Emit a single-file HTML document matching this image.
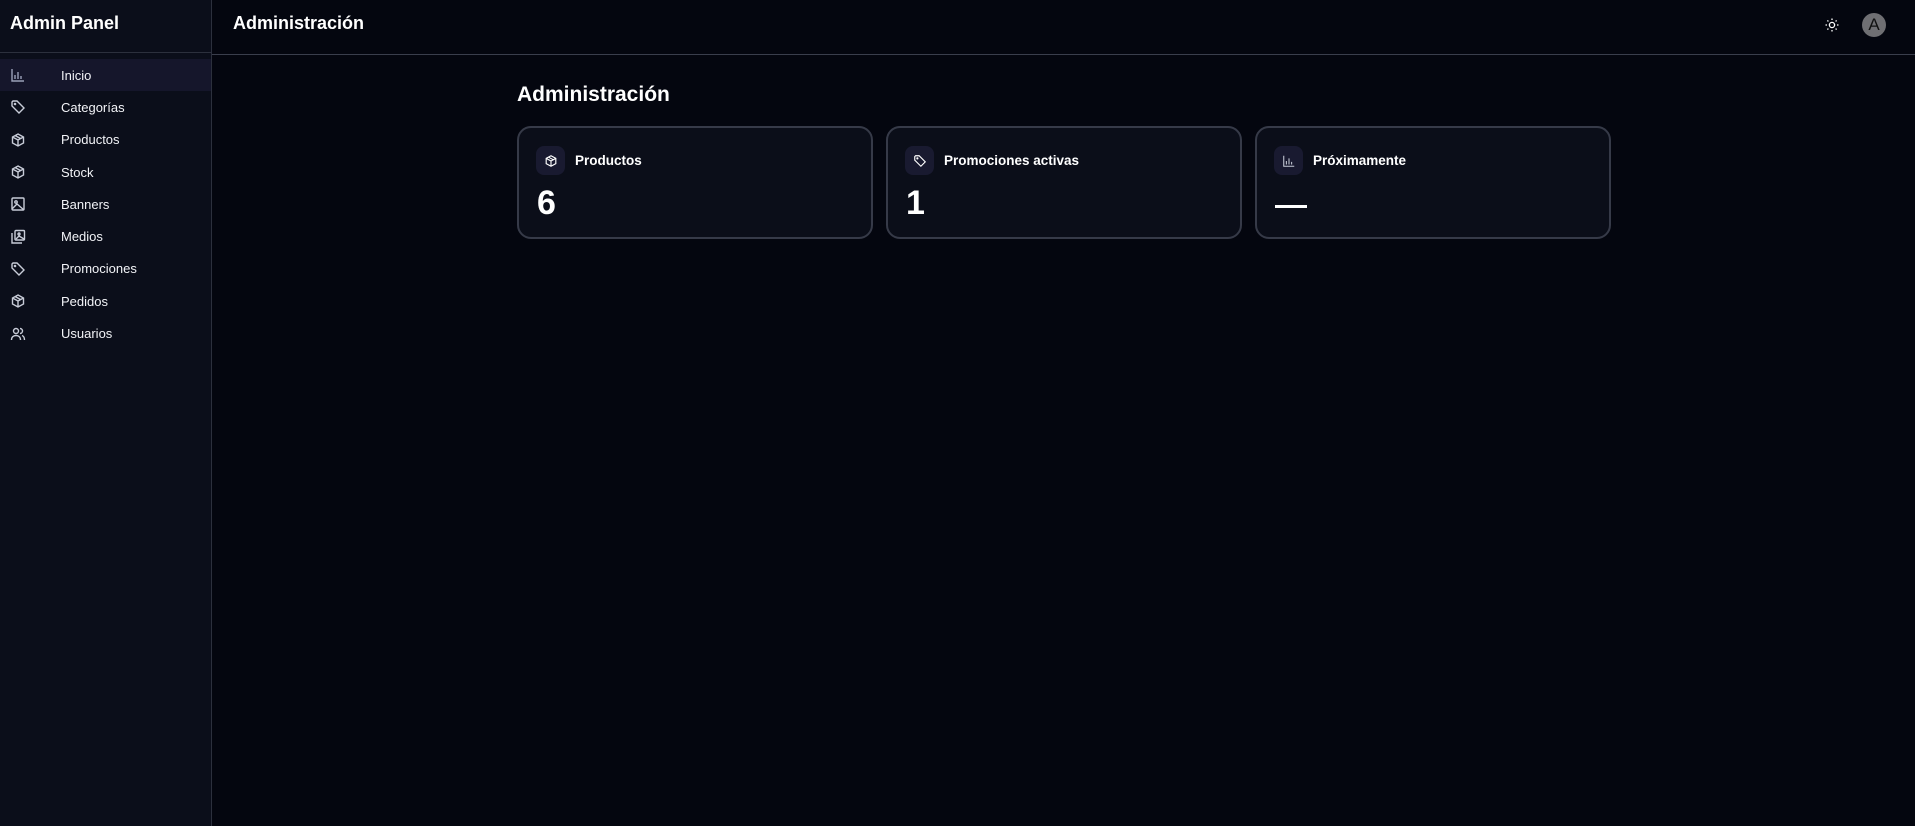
<!DOCTYPE html>
<html><head><meta charset="utf-8"><style>
*{box-sizing:border-box;margin:0;padding:0}
body{width:1915px;height:826px;background:#04060f;font-family:"Liberation Sans",Arial,sans-serif;color:#fff;position:relative;overflow:hidden}
.side{position:absolute;left:0;top:0;width:212px;height:826px;background:#0b0e1a;border-right:1px solid #2c303d}
.brand{height:53px;border-bottom:1px solid #2c303d;padding:13px 10px;font-weight:bold;font-size:18px}
.nav{padding-top:6px}
.item{height:32.3px;display:flex;align-items:center;font-size:13px;color:#f2f3f7}
.item.act{background:#15162b}
.item svg{margin-left:10px;width:16px;height:16px;flex:none}
.item span{margin-left:35px}
.top{position:absolute;left:212px;top:0;right:0;height:55px;border-bottom:1px solid #3a3e4c}
.top h1{position:absolute;left:21px;top:13px;font-size:18px;font-weight:bold}
.av{position:absolute;left:1650px;top:13px;width:24px;height:24px;border-radius:50%;background:#6f6f73;color:#111;font-size:17px;text-align:center;line-height:24px}
.title{position:absolute;left:517px;top:83px;font-size:21px;font-weight:bold}
.card{position:absolute;top:126px;width:356px;height:113px;background:#0b0e19;border:2px solid #363a48;border-radius:14px}
.ib{position:absolute;left:17px;top:18px;width:29px;height:29px;border-radius:8px;background:#191a30;display:flex;align-items:center;justify-content:center}
.lab{position:absolute;left:56px;top:25px;font-size:13.5px;font-weight:bold}
.num{position:absolute;left:18px;top:56px;font-size:34px;font-weight:bold}
.dash{position:absolute;left:18px;top:77px;width:32px;height:3px;background:#fff}
</style></head><body>
<div class="side">
<div class="brand">Admin Panel</div>
<div class="nav">
<div class="item act"><svg viewBox="0 0 16 16" fill="none" stroke="#9aa0b8" stroke-width="1.4"><path d="M2 2v12h12M5 12V8M8 12V5M11 12V9"/></svg><span>Inicio</span></div>
<div class="item"><svg viewBox="0 0 16 16" fill="none" stroke="#c8ccd8" stroke-width="1.4"><path d="M2 3v4l7 7 5-5-7-7H3z"/><circle cx="5" cy="5" r=".6"/></svg><span>Categorías</span></div>
<div class="item"><svg viewBox="0 0 16 16" fill="none" stroke="#c8ccd8" stroke-width="1.4"><path d="M8 2l5.5 3v6L8 14l-5.5-3V5zM2.5 5L8 8l5.5-3M8 8v6M5 3.5l5.5 3"/></svg><span>Productos</span></div>
<div class="item"><svg viewBox="0 0 16 16" fill="none" stroke="#c8ccd8" stroke-width="1.4"><path d="M8 2l5.5 3v6L8 14l-5.5-3V5zM2.5 5L8 8l5.5-3M8 8v6M5 3.5l5.5 3"/></svg><span>Stock</span></div>
<div class="item"><svg viewBox="0 0 16 16" fill="none" stroke="#c8ccd8" stroke-width="1.4"><rect x="2" y="2" width="12" height="12" rx="1"/><circle cx="6" cy="6" r="1.2"/><path d="M2 13l5-5 7 6"/></svg><span>Banners</span></div>
<div class="item"><svg viewBox="0 0 16 16" fill="none" stroke="#c8ccd8" stroke-width="1.4"><rect x="5" y="1.5" width="9.5" height="9.5" rx="1"/><path d="M2 4v10h10"/><circle cx="9" cy="5" r="1"/><path d="M6 10l3-3 5 3"/></svg><span>Medios</span></div>
<div class="item"><svg viewBox="0 0 16 16" fill="none" stroke="#c8ccd8" stroke-width="1.4"><path d="M2 3v4l7 7 5-5-7-7H3z"/><circle cx="5" cy="5" r=".6"/></svg><span>Promociones</span></div>
<div class="item"><svg viewBox="0 0 16 16" fill="none" stroke="#c8ccd8" stroke-width="1.4"><path d="M8 2l5.5 3v6L8 14l-5.5-3V5zM2.5 5L8 8l5.5-3M8 8v6M5 3.5l5.5 3"/></svg><span>Pedidos</span></div>
<div class="item"><svg viewBox="0 0 16 16" fill="none" stroke="#c8ccd8" stroke-width="1.4"><circle cx="6" cy="5" r="2.5"/><path d="M1.5 14c0-3 2-4.5 4.5-4.5s4.5 1.5 4.5 4.5M10 2.5a2.5 2.5 0 010 5M12 9.5c1.5.5 2.5 2 2.5 4.5"/></svg><span>Usuarios</span></div>
</div></div>
<div class="top"><h1>Administración</h1>
<svg style="position:absolute;left:1612px;top:17px" width="16" height="16" viewBox="0 0 16 16" fill="none" stroke="#fff" stroke-width="1.3"><circle cx="8" cy="8" r="2.6"/><path d="M8 1.5v1.5M8 13v1.5M1.5 8H3M13 8h1.5M3.4 3.4l1 1M11.6 11.6l1 1M3.4 12.6l1-1M11.6 4.4l1-1"/></svg>
<div class="av">A</div></div>
<div class="title">Administración</div>
<div class="card" style="left:517px"><div class="ib"><svg width="14" height="14" viewBox="0 0 16 16" fill="none" stroke="#fff" stroke-width="1.3"><path d="M8 2l5.5 3v6L8 14l-5.5-3V5zM2.5 5L8 8l5.5-3M8 8v6M5 3.5l5.5 3"/></svg></div><div class="lab">Productos</div><div class="num">6</div></div>
<div class="card" style="left:886px"><div class="ib"><svg width="14" height="14" viewBox="0 0 16 16" fill="none" stroke="#fff" stroke-width="1.3"><path d="M2 3v4l7 7 5-5-7-7H3z"/><circle cx="5" cy="5" r=".6"/></svg></div><div class="lab">Promociones activas</div><div class="num">1</div></div>
<div class="card" style="left:1255px"><div class="ib"><svg width="14" height="14" viewBox="0 0 16 16" fill="none" stroke="#c8ccd8" stroke-width="1.2"><path d="M2 2v12h12M5 12V8M8 12V5M11 12V9"/></svg></div><div class="lab">Próximamente</div><div class="dash"></div></div>
</body></html>
